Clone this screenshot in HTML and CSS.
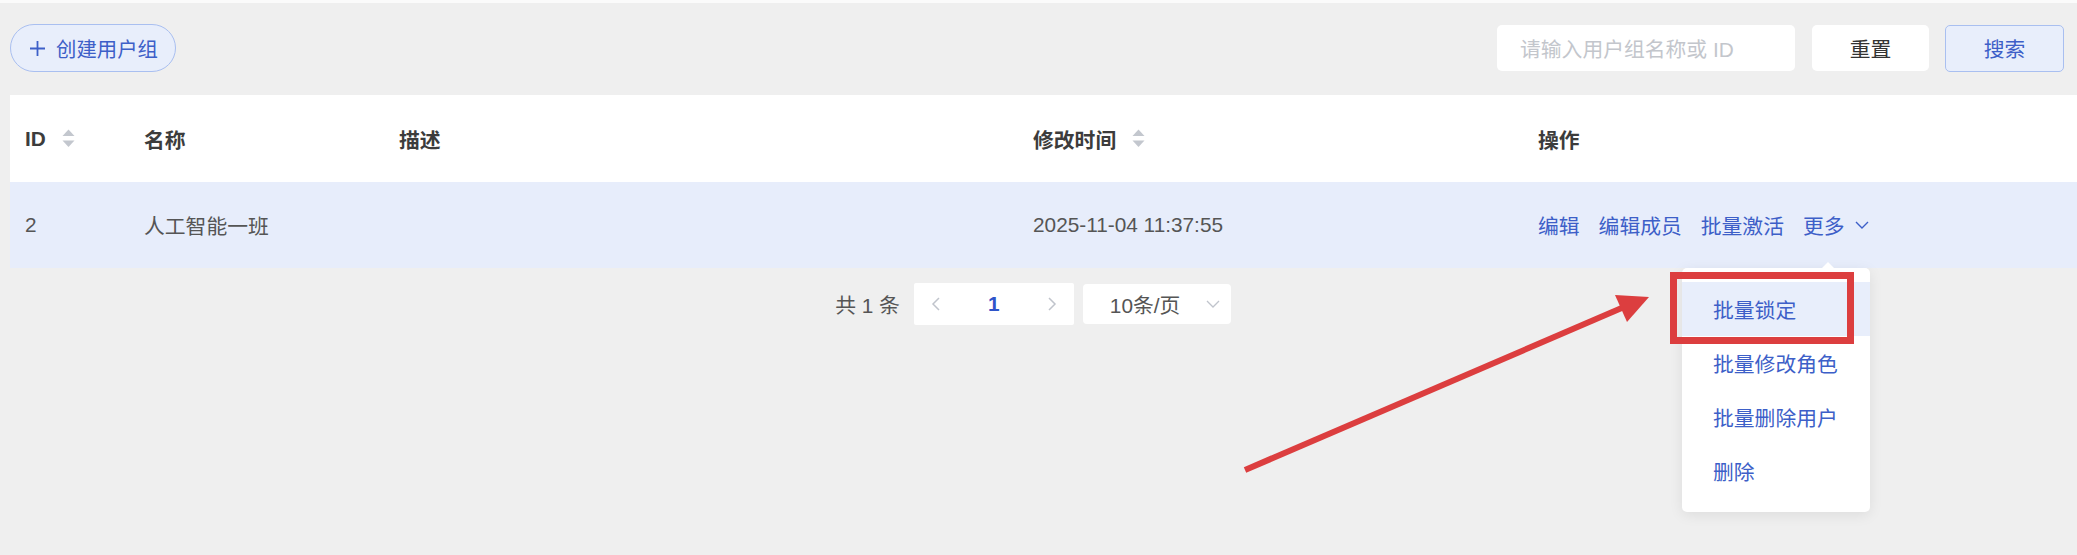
FILE: index.html
```html
<!DOCTYPE html>
<html lang="zh-CN">
<head>
<meta charset="utf-8">
<title>用户组</title>
<link rel="stylesheet" href="styles.css">
</head>
<body>
<div class="page">
  <div class="topbar"></div>
  <div class="toolbar">
    <button class="btn-create">
      <svg class="plus" width="17" height="17" viewBox="0 0 17 17"><path d="M8.5 1v15M1 8.5h15" stroke="#3d5fc8" stroke-width="1.8" fill="none"/></svg>
      <span>创建用户组</span>
    </button>
    <div class="search-group">
      <div class="input"><span class="placeholder">请输入用户组名称或 ID</span></div>
      <button class="btn btn-reset">重置</button>
      <button class="btn btn-search">搜索</button>
    </div>
  </div>

  <div class="table">
    <div class="tr thead">
      <div class="td">ID<svg class="sort" width="13" height="19" viewBox="0 0 13 19"><path d="M0.5 7L6.5 0.5L12.5 7Z" fill="#c3c7ce"/><path d="M0.5 11.5L6.5 18L12.5 11.5Z" fill="#c3c7ce"/></svg></div>
      <div class="td">名称</div>
      <div class="td">描述</div>
      <div class="td">修改时间<svg class="sort" width="13" height="19" viewBox="0 0 13 19"><path d="M0.5 7L6.5 0.5L12.5 7Z" fill="#c3c7ce"/><path d="M0.5 11.5L6.5 18L12.5 11.5Z" fill="#c3c7ce"/></svg></div>
      <div class="td">操作</div>
    </div>
    <div class="tr tbody">
      <div class="td">2</div>
      <div class="td">人工智能一班</div>
      <div class="td"></div>
      <div class="td">2025-11-04 11:37:55</div>
      <div class="td actions">
        <a class="link">编辑</a>
        <a class="link">编辑成员</a>
        <a class="link">批量激活</a>
        <a class="link more">更多<svg class="chev" width="14" height="8" viewBox="0 0 14 8"><path d="M1 1l6 6 6-6" stroke="#3d5fc8" stroke-width="1.4" fill="none"/></svg></a>
      </div>
    </div>
  </div>

  <div class="pagination">
    <span class="total">共 1 条</span>
    <div class="pager">
      <svg width="9" height="14" viewBox="0 0 9 14"><path d="M8 1L2 7l6 6" stroke="#c0c4cc" stroke-width="1.5" fill="none"/></svg>
      <span class="page-num">1</span>
      <svg width="9" height="14" viewBox="0 0 9 14"><path d="M1 1l6 6-6 6" stroke="#c0c4cc" stroke-width="1.5" fill="none"/></svg>
    </div>
    <div class="size-select">
      <span>10条/页</span>
      <svg width="14" height="8" viewBox="0 0 14 8"><path d="M1 1l6 6 6-6" stroke="#c0c4cc" stroke-width="1.3" fill="none"/></svg>
    </div>
  </div>

  <div class="dropdown">
    <div class="item active">批量锁定</div>
    <div class="item">批量修改角色</div>
    <div class="item">批量删除用户</div>
    <div class="item">删除</div>
  </div>

  <svg class="annotation" width="2077" height="555" viewBox="0 0 2077 555">
    <rect x="1673.5" y="275.5" width="177" height="65" fill="none" stroke="#dc3e3f" stroke-width="7"/>
    <line x1="1245" y1="470" x2="1624" y2="307" stroke="#dc3e3f" stroke-width="6"/>
    <polygon points="1649,297 1615,295 1627,322" fill="#dc3e3f"/>
  </svg>
</div>
</body>
</html>
```

FILE: styles.css
```css
* { box-sizing: border-box; }

html, body {
  margin: 0;
  padding: 0;
}

body {
  background: #efefef;
  font-family: "Liberation Sans", "Noto Sans CJK SC", sans-serif;
  font-size: 20.8px;
  color: #555;
}

.page {
  position: relative;
  width: 2077px;
  height: 555px;
  overflow: hidden;
}

.topbar {
  height: 3px;
  background: #fbfbfb;
}

.toolbar {
  display: flex;
  align-items: center;
  height: 48px;
  margin: 21px 13px 23px 10px;
}

.btn-create {
  display: flex;
  align-items: center;
  gap: 10px;
  height: 48px;
  width: 166px;
  padding: 0 0 0 18px;
  border: 1px solid #a9bff0;
  border-radius: 24px;
  background: #e8eefb;
  color: #3d5fc8;
  font: inherit;
  font-size: 20.4px;
}

.search-group {
  margin-left: auto;
  display: flex;
  align-items: center;
  gap: 17px;
}

.input {
  width: 298px;
  height: 46px;
  background: #fff;
  border-radius: 5px;
  display: flex;
  align-items: center;
  padding-left: 23px;
}

.placeholder {
  color: #c3c6cc;
}

.btn {
  height: 46px;
  border-radius: 5px;
  font: inherit;
  display: flex;
  align-items: center;
  justify-content: center;
}

.btn-reset {
  width: 117px;
  background: #fff;
  border: none;
  color: #333;
}

.btn-search {
  width: 119px;
  height: 47px;
  margin-left: -1px;
  background: #e8eefb;
  border: 1px solid #a9bff0;
  color: #3d5fc8;
}

.table {
  margin-left: 10px;
}

.tr {
  display: grid;
  grid-template-columns: 119px 255px 634px 505px 1fr;
  align-items: center;
}

.td {
  padding-left: 15px;
  display: flex;
  align-items: center;
  white-space: nowrap;
}

.thead {
  height: 87px;
  background: #fff;
  font-weight: 700;
  color: #3c3c3c;
}

.tbody {
  height: 86px;
  background: #e7edfb;
  color: #555;
}

.sort {
  margin-left: 16px;
}

.actions {
  gap: 19px;
}

.link {
  color: #3d5fc8;
  display: flex;
  align-items: center;
}

.more .chev {
  margin-left: 10px;
}

.pagination {
  display: flex;
  align-items: center;
  justify-content: center;
  margin-top: 15px;
  padding: 0 21px 0 10px;
}

.total {
  color: #555;
  margin-right: 14px;
}

.pager {
  width: 160px;
  height: 42px;
  background: #fff;
  border-radius: 2px;
  display: flex;
  align-items: center;
  justify-content: space-between;
  padding: 0 17px;
}

.page-num {
  color: #2f54c9;
  font-weight: 700;
}

.size-select {
  width: 148px;
  height: 40px;
  margin-left: 9px;
  background: #fff;
  border-radius: 4px;
  display: flex;
  align-items: center;
  justify-content: space-between;
  padding: 0 11px 0 27px;
  color: #555;
}

.dropdown {
  position: absolute;
  left: 1682px;
  top: 268px;
  width: 188px;
  padding: 14px 0;
  background: #fff;
  border-radius: 5px;
  box-shadow: 0 3px 14px rgba(0, 0, 0, 0.08);
}

.dropdown::before {
  content: "";
  position: absolute;
  top: -6px;
  left: 140px;
  border-left: 6px solid transparent;
  border-right: 6px solid transparent;
  border-bottom: 6px solid #fff;
}

.item {
  height: 54px;
  display: flex;
  align-items: center;
  padding-left: 31px;
  color: #3d5fc8;
}

.item.active {
  background: #e8eefb;
}

.annotation {
  position: absolute;
  left: 0;
  top: 0;
  pointer-events: none;
}
```
